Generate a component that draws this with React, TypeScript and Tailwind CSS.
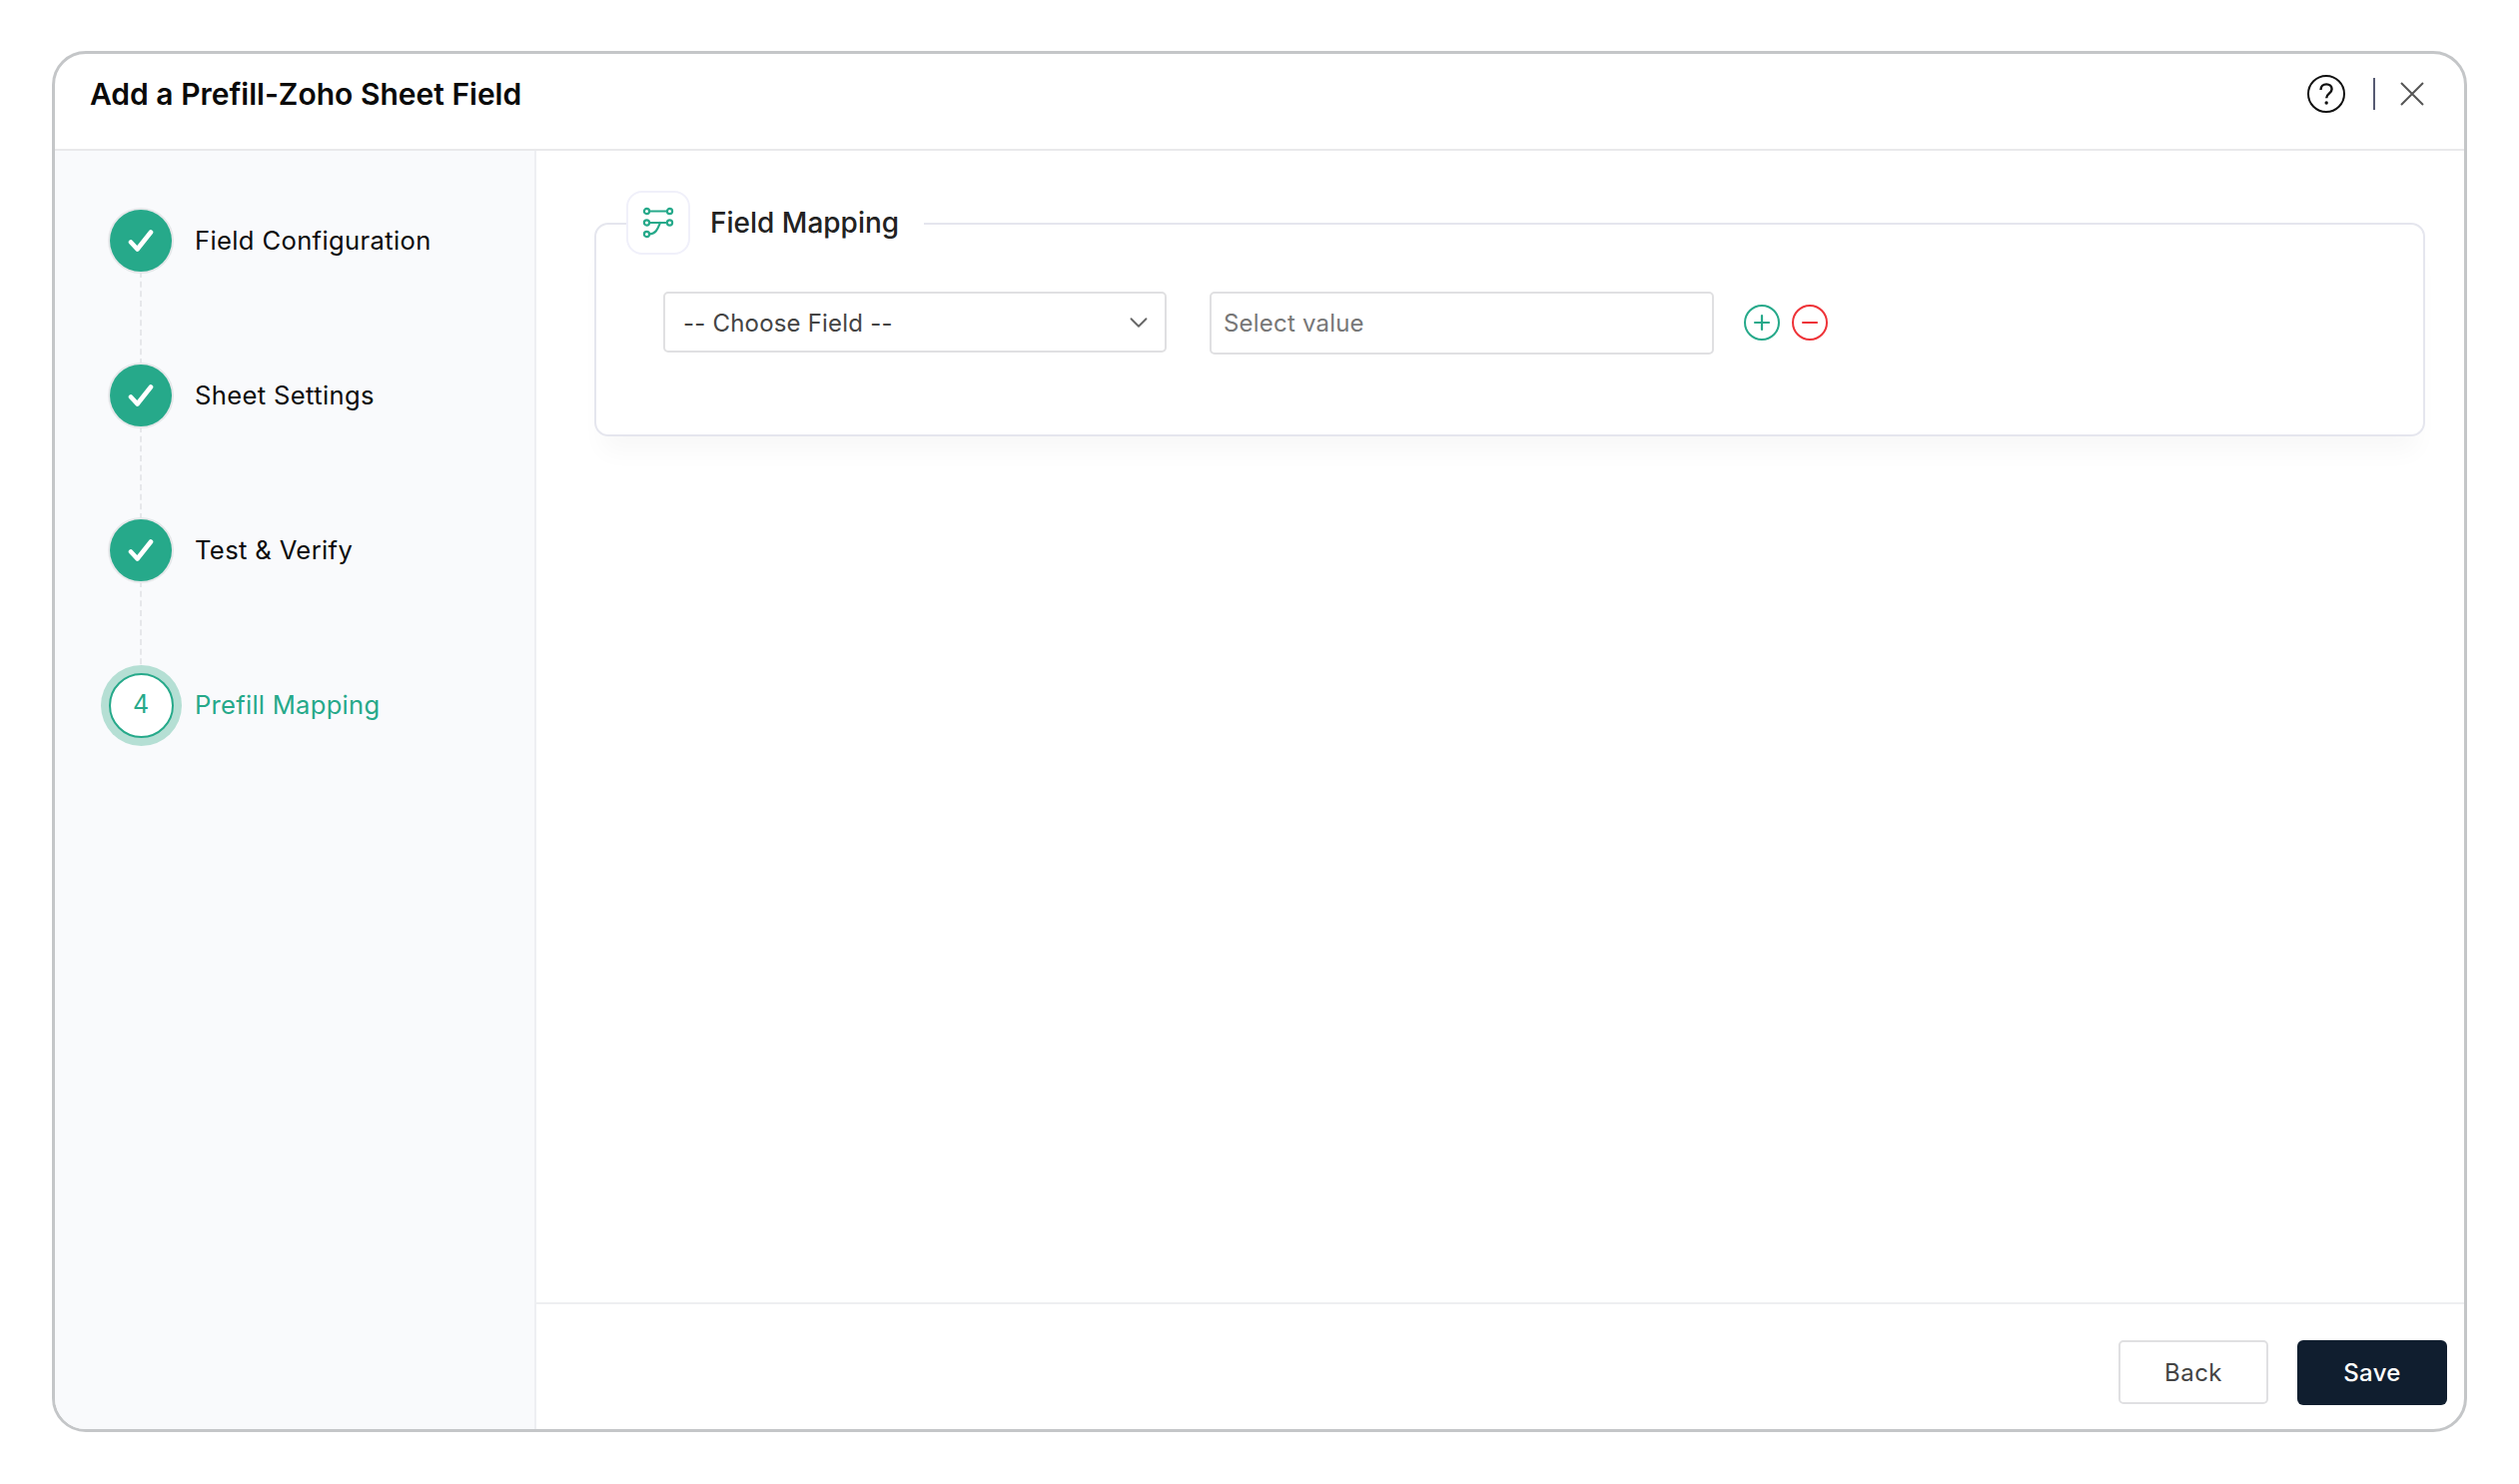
import { ChevronDown, Minus, Plus } from "lucide-react";

const steps = ["Field Configuration", "Sheet Settings", "Test & Verify"];

function MappingIcon() {
  return (
    <svg width="32" height="32" viewBox="0 0 32 32" fill="none" stroke="#26a98a" strokeWidth="2.2" strokeLinecap="round">
      <circle cx="4.5" cy="4.5" r="2.6" />
      <circle cx="27.5" cy="4.5" r="2.6" />
      <path d="M7.2 4.5H24.8" />
      <circle cx="4.5" cy="16" r="2.6" />
      <circle cx="27.5" cy="16" r="2.6" />
      <path d="M7.2 16H24.8" />
      <circle cx="4.5" cy="27.5" r="2.6" />
      <path d="M7.2 27.5C14 27 15.5 22 18 16" />
    </svg>
  );
}

function HelpIcon() {
  return (
    <svg width="38" height="38" viewBox="0 0 38 38" fill="none" stroke="#111" strokeWidth="2">
      <circle cx="19" cy="19" r="18" />
      <path d="M13.5 15c0-3.4 2.4-5.6 5.7-5.6 3.2 0 5.4 2 5.4 4.8 0 4.4-5.4 4.6-5.4 9" strokeWidth="2.4" />
      <circle cx="19.2" cy="28" r="1.7" fill="#111" stroke="none" />
    </svg>
  );
}

function DoneStep({ label }: { label: string }) {
  return (
    <>
      <div className="flex items-center gap-[23px]">
        <div className="flex h-[62px] w-[62px] items-center justify-center rounded-full bg-[#26a98a] ring-2 ring-[#e6e8ea]">
          <svg width="26" height="24" viewBox="0 0 26 24" fill="none" stroke="#fff" strokeWidth="4.6" strokeLinecap="round" strokeLinejoin="round">
            <path d="M3 13.5L9.5 20.5L23 3.5" />
          </svg>
        </div>
        <span className="mt-[-1px] text-[25.6px] leading-[32px] tracking-[0.35px] text-[#0b0b0b]">{label}</span>
      </div>
      <div className="flex h-[93px] w-[62px] justify-center">
        <div className="border-l-2 border-dashed border-[#e6e7ea]" />
      </div>
    </>
  );
}

export default function App() {
  return (
    <div className="h-[1486px] w-[2522px] bg-white pl-[52px] pt-[51px] font-['Inter',sans-serif]">
      <div className="flex h-[1383px] w-[2418px] flex-col overflow-hidden rounded-[34px] border-[3px] border-[#c4c6c8] bg-white">
        {/* Header */}
        <div className="flex h-[97px] shrink-0 items-center justify-between border-b-2 border-[#e9e9eb] pb-[16px] pl-[35px] pr-[40px]">
          <h1 className="text-[30px] font-semibold leading-none text-[#0a0a0a]">Add a Prefill-Zoho Sheet Field</h1>
          <div className="flex items-center">
            <HelpIcon />
            <div className="ml-[28px] h-[32px] w-[2px] bg-[#565a72]" />
            <svg className="ml-[25px]" width="24" height="24" viewBox="0 0 24 24" stroke="#555" strokeWidth="2" fill="none">
              <path d="M1 1L23 23M23 1L1 23" />
            </svg>
          </div>
        </div>

        <div className="flex min-h-0 flex-1">
          {/* Sidebar */}
          <div className="w-[482px] shrink-0 border-r-2 border-[#eeeff2] bg-[#f9fafc] pl-[55px] pt-[59px]">
            {steps.map((s) => (
              <DoneStep key={s} label={s} />
            ))}
            <div className="flex items-center gap-[23px]">
              <div className="flex h-[62px] w-[62px] items-center justify-center">
                <div className="flex h-[65px] w-[65px] shrink-0 items-center justify-center rounded-full border-2 border-[#26a98a] bg-white text-[25px] text-[#26a98a] ring-[8px] ring-[#b5dfd4]">
                  4
                </div>
              </div>
              <span className="mt-[-1px] text-[25.6px] leading-[32px] tracking-[0.25px] text-[#26a98a]">Prefill Mapping</span>
            </div>
          </div>

          {/* Main */}
          <div className="flex min-w-0 flex-1 flex-col">
            <div className="flex-1 pl-[58px] pr-[39px] pt-[72px]">
              <div className="relative h-[214px] rounded-[14px] border-2 border-[#e5e6ee] pl-[67px] pt-[67px] shadow-[0_24px_24px_-8px_rgba(16,24,40,0.03)]">
                <div className="absolute left-[30px] top-[-34px] flex items-center gap-[20px] bg-white pr-[25px]">
                  <div className="flex h-[64px] w-[64px] items-center justify-center rounded-[16px] border-2 border-[#f0f0fa] bg-white">
                    <MappingIcon />
                  </div>
                  <span className="text-[28px] font-medium text-[#222]">Field Mapping</span>
                </div>
                <div className="flex items-start">
                  <div className="flex h-[61px] w-[504px] items-center justify-between rounded-[5px] border-2 border-[#e0e0e2] pl-[18px] pr-[11px] text-[24px] tracking-[0.2px] text-[#444]">
                    <span className="mt-[2px]">-- Choose Field --</span>
                    <ChevronDown className="h-[30px] w-[30px] text-[#666]" strokeWidth={1.5} />
                  </div>
                  <input
                    readOnly
                    placeholder="Select value"
                    className="ml-[43px] h-[63px] w-[505px] rounded-[5px] border-2 border-[#e0e0e2] pl-[12px] text-[24px] tracking-[0.2px] outline-none placeholder:text-[#777]"
                  />
                  <div className="ml-[30px] mt-[13px] flex gap-[12px]">
                    <div className="flex h-[36px] w-[36px] items-center justify-center rounded-full border-2 border-[#26a98a]">
                      <Plus className="h-[24px] w-[24px] text-[#26a98a]" strokeWidth={2.2} />
                    </div>
                    <div className="flex h-[36px] w-[36px] items-center justify-center rounded-full border-2 border-[#ee3338]">
                      <Minus className="h-[24px] w-[24px] text-[#ee3338]" strokeWidth={2.2} />
                    </div>
                  </div>
                </div>
              </div>
            </div>

            {/* Footer */}
            <div className="flex h-[127px] shrink-0 items-start justify-end gap-[29px] border-t-2 border-[#eeeff1] pr-[17px] pt-[36px]">
              <button className="h-[64px] w-[150px] rounded-[5px] border-2 border-[#e0e0e2] pt-[2px] text-[24px] tracking-[0.5px] text-[#444]">Back</button>
              <button className="h-[65px] w-[150px] rounded-[6px] bg-[#101e2f] text-[24px] font-medium tracking-[0.3px] text-white">Save</button>
            </div>
          </div>
        </div>
      </div>
    </div>
  );
}
